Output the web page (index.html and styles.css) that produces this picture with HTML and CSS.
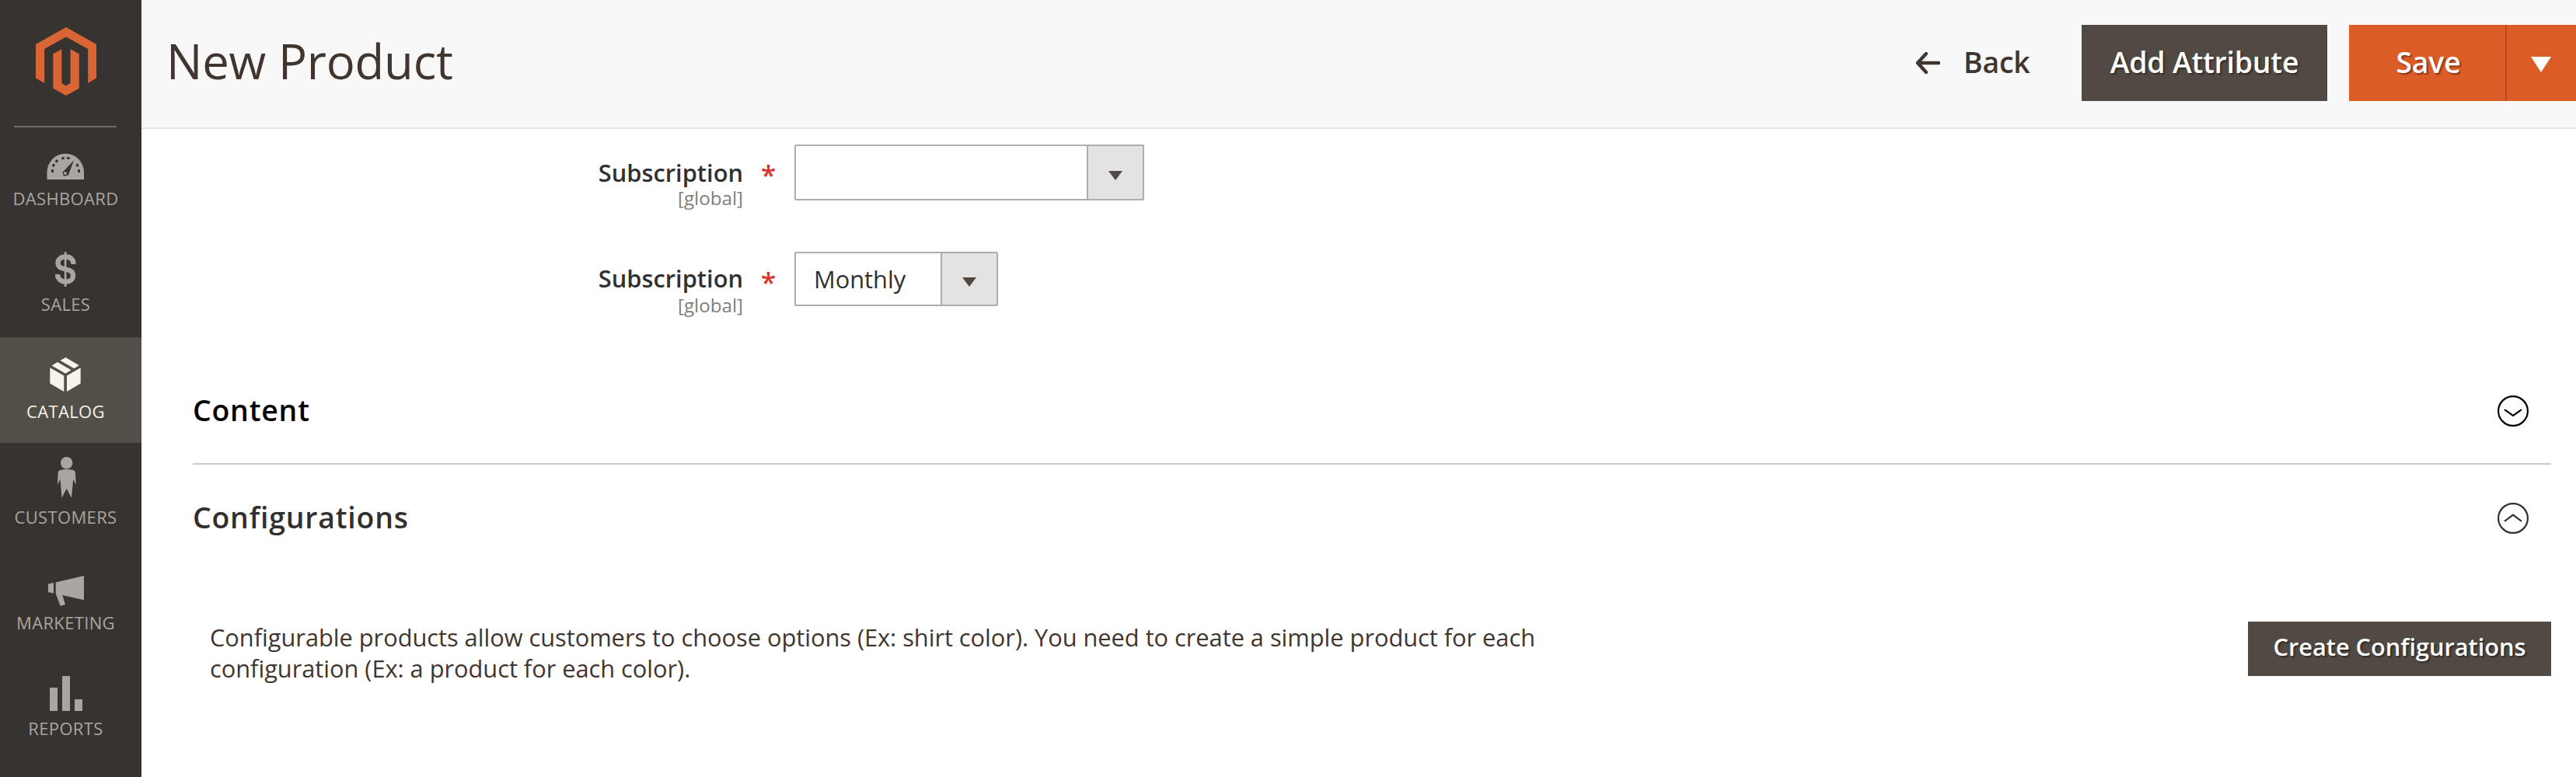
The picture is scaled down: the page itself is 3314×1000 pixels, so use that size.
FILE: index.html
```html
<!DOCTYPE html>
<html lang="en">
<head>
<meta charset="utf-8">
<title>New Product</title>
<link rel="stylesheet" href="styles.css">
</head>
<body>
<div class="page">
  <nav class="sidebar">
    <svg class="logo" viewBox="0 0 170 162">
      <path d="M85 35 124 57V100.5L113.2 107V63L85 47.5 57.2 63V107L46 100.5V57Z"/>
      <path d="M79.4 63.3 68.3 69.5V113.7L85 123 101.8 113.7V69.5L90.6 63.3V107L85 110.5 79.4 107Z"/>
    </svg>
    <a class="item first">
      <svg viewBox="0 162 170 78"><path d="M60.5 231V221.500a23.750 23.800 0 0 1 47.500 0V231Z"/><path class="cut" d="M95 206.500 87.800 225.500 82 226.800 80.500 221.800Z"/><path class="cut" d="M66 218h3v4h-3zM68 210.500l3 1.200-1.500 3.300-2.700-1.300zM72.800 205l2.500 2-2.300 2.700-2.300-2zM79 202.500l3.300-.8.600 3-3.300.7zM86 201.700l4 .8-.7 2.700-3.500-.6zM97.500 211.500l2.600-1.200 1.500 3.500-2.700 1.200zM100 218h3v4h-3z"/><circle cx="84" cy="223" r="2"/></svg>
      <span>DASHBOARD</span>
    </a>
    <a class="item">
      <svg viewBox="0 298 170 78"><path class="money" d="M94.500 340C94.500 334 91 330.500 84.500 330.500S74.500 333.500 74.500 338.500C74.500 350 94 343 94 354.500 94 360 90 362.700 84.500 362.700S74 359 74 353"/><path d="M82.800 324h2.700v45h-2.700z"/></svg>
      <span>SALES</span>
    </a>
    <a class="item active">
      <svg viewBox="0 434 170 80"><path d="M84.500 460 101.800 470.300 95.300 474.300 77.500 464ZM74 466 91.500 476.300 84.300 480.700 66.500 470.500ZM64.300 473.300 82.300 483.500V504L64.300 493.500ZM103.700 473.300 86 483.500V504L103.700 493.500Z"/></svg>
      <span>CATALOG</span>
    </a>
    <a class="item">
      <svg viewBox="0 570 170 80"><circle cx="85.700" cy="595.700" r="7.700"/><path d="M78 604.700Q85.700 603.500 93.500 604.700 96.700 605.500 97 609L97.700 624 94.200 616.700 92 640.700 85.700 629 79.500 640.700 77.500 616.700 74 624 74.600 609Q74.700 605.500 78 604.700Z"/></svg>
      <span>CUSTOMERS</span>
    </a>
    <a class="item">
      <svg viewBox="0 706 170 80"><path d="M62 751.500 69 750V763.500L62 762ZM71.700 749.500 108 741V772.300L80.300 766 84 778 77.700 780 71.700 764Z"/></svg>
      <span>MARKETING</span>
    </a>
    <a class="item">
      <svg viewBox="0 842 170 80"><path d="M64 885h10v30H64zM80 870h10v45H80zM96 900h10v15H96z"/></svg>
      <span>REPORTS</span>
    </a>
  </nav>
  <main class="main">
    <header class="header">
      <h1>New Product</h1>
      <div class="actions">
        <a class="back"><svg viewBox="0 0 32 28"><path d="M14 2 3 14 14 26M3 14H30"/></svg><span>Back</span></a>
        <button class="btn attr">Add Attribute</button>
        <div class="split">
          <button class="btn save">Save</button>
          <button class="btn toggle" aria-label="More save options"><svg viewBox="0 0 26 20"><path d="M0 0H26L13 20Z"/></svg></button>
        </div>
      </div>
    </header>
    <section class="fields">
      <div class="field">
        <div class="label"><b>Subscription</b><small>[global]</small></div>
        <div class="star">*</div>
        <div class="select wide"><span class="value"></span><span class="arrow"><svg viewBox="0 0 18 12"><path d="M0 0H18L9 12Z"/></svg></span></div>
      </div>
      <div class="field second">
        <div class="label"><b>Subscription</b><small>[global]</small></div>
        <div class="star">*</div>
        <div class="select"><span class="value">Monthly</span><span class="arrow"><svg viewBox="0 0 18 12"><path d="M0 0H18L9 12Z"/></svg></span></div>
      </div>
    </section>
    <section class="panel content">
      <h2>Content</h2>
      <svg viewBox="0 0 40 40"><circle cx="20" cy="20" r="18.900"/><path d="M9.700 18.700 20 26 30.300 18.700"/></svg>
    </section>
    <section class="panel config">
      <h2>Configurations</h2>
      <svg viewBox="0 0 40 40"><circle cx="20" cy="20" r="18.900"/><path d="M9.700 23.300 20 15.700 30.300 23.300"/></svg>
    </section>
    <div class="intro">
      <p>Configurable products allow customers to choose options (Ex: shirt color). You need to create a simple product for each<br>configuration (Ex: a product for each color).</p>
      <button class="btn create">Create Configurations</button>
    </div>
  </main>
</div>
</body>
</html>
```

FILE: styles.css
```css
* { box-sizing: border-box; margin: 0; padding: 0; }
body { font-family: "Open Sans", "Noto Sans", sans-serif; font-size: 30.8px; color: #41362f; background: #fff; overflow: hidden; }
.page { display: flex; width: 3314px; height: 1000px; }
svg { display: block; flex: none; }

.sidebar { width: 182px; flex: none; background: #373330; }
.logo { width: 170px; height: 162px; fill: #da6534; }
.item { display: block; width: 182px; height: 136px; color: #a9a5a0; font-size: 22px; line-height: 30px; }
.item span { display: block; width: 169px; text-align: center; letter-spacing: .35px; }
.item svg { width: 170px; height: 80px; fill: #a9a5a0; }
.item.first svg, .item.first + .item svg { height: 78px; }
.item.first { background: linear-gradient(#736963, #736963) 18px 0 / 132px 2px no-repeat; }
.item .cut { fill: #373330; }
.item .money { fill: none; stroke: #a9a5a0; stroke-width: 6.3px; }
.item.active { background: #524e48; color: #f7f3eb; }
.item.active svg { fill: #f7f3eb; }

.main { flex: 1; min-width: 0; }
.header { display: flex; justify-content: space-between; height: 166px; padding-left: 32px; background: #f8f8f8; border-bottom: 2px solid #e3e3e3; }
h1 { padding-top: 48px; font-size: 61.6px; line-height: 60px; font-weight: 400; letter-spacing: -.2px; }
.actions { display: flex; height: 98px; margin-top: 32px; font-size: 37.4px; font-weight: 600; letter-spacing: -.2px; }
.back { display: flex; align-items: center; width: 214px; gap: 30px; padding-bottom: 3px; }
.back svg { width: 32px; height: 28px; margin-top: 2px; fill: none; stroke: #41362f; stroke-width: 4.4px; stroke-linecap: round; stroke-linejoin: round; }
.btn { display: flex; align-items: center; justify-content: center; border: 0; padding-bottom: 3px; font: inherit; font-weight: 600; letter-spacing: inherit; color: #fff; background: #514943; text-shadow: 2px 2px 2px rgba(0, 0, 0, .4); white-space: nowrap; }
.attr { width: 316px; margin-right: 28px; }
.split { display: flex; width: 292px; }
.save, .toggle { background: #dc5c26; }
.save { width: 201px; padding-left: 3px; }
.toggle { width: 91px; border-left: 2px solid #b34e24; padding: 4px 2px 0 0; }
.toggle svg { width: 26px; height: 20px; fill: #fff; }

.fields { height: 314px; padding-top: 20px; }
.field { display: grid; grid-template-columns: 774px 66px auto; justify-content: start; align-items: start; height: 138px; }
.label { display: flex; flex-direction: column; padding-top: 18px; text-align: right; }
.label b { height: 36px; line-height: 36px; font-weight: 600; color: #303030; }
.label small { font-size: 24.2px; line-height: 30px; color: #808080; }
.second .label { padding-top: 16px; }
.second .label b { height: 38px; }
.star { padding: 15px 0 0 23px; color: #d9332d; font-size: 35px; line-height: 48px; font-weight: 600; }
.select { display: flex; width: 262px; height: 70px; border: 2px solid #adadad; border-radius: 2px; color: #303030; }
.select.wide { width: 450px; height: 72px; }
.value { flex: 1; padding-left: 23px; line-height: 66px; }
.arrow { display: flex; align-items: center; justify-content: center; width: 72px; padding: 7px 1px 0 0; background: #e3e3e3; border-left: 2px solid #adadad; }
.arrow svg { width: 18px; height: 12px; fill: #514943; }

.panel { display: flex; justify-content: space-between; align-items: center; margin: 0 32px 0 66px; padding-right: 29px; color: #303030; }
.panel h2 { padding-bottom: 1px; font-size: 37.4px; line-height: 50px; font-weight: 600; letter-spacing: .8px; }
.panel svg { width: 40px; height: 40px; fill: none; stroke: currentColor; stroke-width: 2.2px; stroke-linecap: round; }
.content { height: 118px; padding-bottom: 19px; color: #000; border-bottom: 2px solid #ccc; }
.config { height: 138px; padding-bottom: 1px; }
.intro { display: flex; justify-content: space-between; margin: 64px 32px 0 88px; line-height: 40px; }
.intro p { letter-spacing: -.03px; }
.create { width: 390px; height: 70px; padding-bottom: 6px; letter-spacing: -.05px; }
```
